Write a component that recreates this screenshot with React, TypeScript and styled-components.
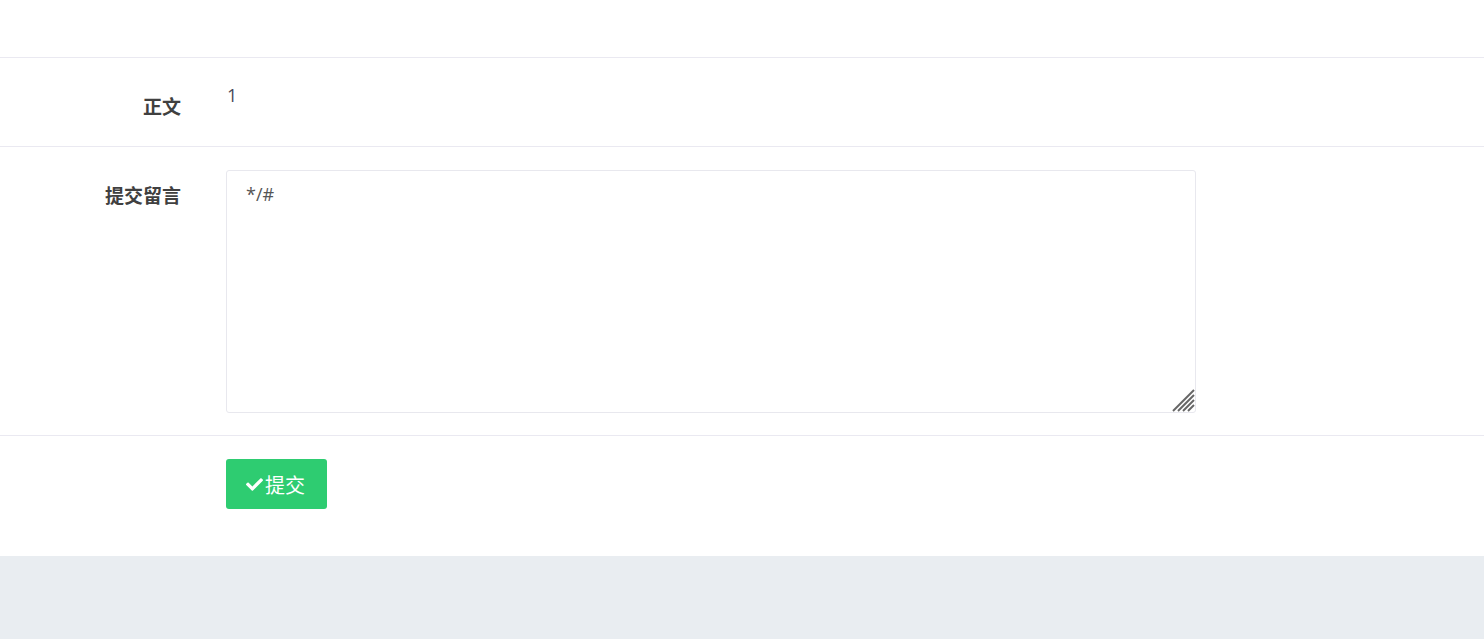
import React from "react";
import styled, { createGlobalStyle } from "styled-components";
import { FaCheck } from "react-icons/fa";

const GlobalStyle = createGlobalStyle`
    html, body {
        margin: 0;
        padding: 0;
        background: #e9edf1;
        font-family: "Open Sans", "Noto Sans CJK SC", sans-serif;
    }
`;

export default function App() {
    return (
        <>
            <GlobalStyle />
            <Panel>
                <TopBar />
                <FormRow $contentHeight={42}>
                    <Label>正文</Label>
                    <Value>1</Value>
                </FormRow>
                <FormRow $bottom={22}>
                    <Label>提交留言</Label>
                    <Field>
                        <TextAreaWrap>
                            <TextArea defaultValue="*/#" />
                            <ResizeGrip width="23" height="23" viewBox="0 0 23 23">
                                <line x1="1" y1="22" x2="22" y2="1" />
                                <line x1="6" y1="22" x2="22" y2="6" />
                                <line x1="11" y1="22" x2="22" y2="11" />
                                <line x1="16" y1="22" x2="22" y2="16" />
                            </ResizeGrip>
                        </TextAreaWrap>
                    </Field>
                </FormRow>
                <FormRow $bottom={47} $last>
                    <Label />
                    <Field>
                        <SubmitButton type="button">
                            <FaCheck size={17} />
                            提交
                        </SubmitButton>
                    </Field>
                </FormRow>
            </Panel>
        </>
    );
}

const Panel = styled.div`
    background: #fff;
    display: flex;
    flex-direction: column;
`;

const TopBar = styled.div`
    height: 57px;
    border-bottom: 1px solid #eae9f1;
`;

const FormRow = styled.div<{ $last?: boolean; $bottom?: number; $contentHeight?: number }>`
    display: grid;
    grid-template-columns: 181px 1fr;
    column-gap: 45px;
    padding: 23px 0 ${(p) => p.$bottom ?? 23}px;
    border-bottom: ${(p) => (p.$last ? "none" : "1px solid #eae9f1")};
    min-height: ${(p) => p.$contentHeight ?? 0}px;
`;

const Label = styled.div`
    text-align: right;
    font-family: "Noto Sans CJK SC", sans-serif;
    font-weight: bold;
    font-size: 19px;
    line-height: 28px;
    color: #404040;
    padding-top: 11px;
`;

const Value = styled.div`
    font-size: 18px;
    line-height: 28px;
    color: #4a4a5a;
    padding-left: 1px;
`;

const Field = styled.div`
    display: flex;
`;

const TextAreaWrap = styled.div`
    position: relative;
    display: flex;
`;

const TextArea = styled.textarea`
    box-sizing: border-box;
    width: 970px;
    height: 243px;
    border: 1px solid #e8e8ee;
    border-radius: 3px;
    padding: 9px 19px;
    font-family: "Open Sans", sans-serif;
    font-size: 18px;
    line-height: 28px;
    color: #555;
    outline: none;
    resize: none;
`;

const ResizeGrip = styled.svg`
    position: absolute;
    right: 1px;
    bottom: 1px;
    pointer-events: none;
    stroke: #666;
    stroke-width: 2;
`;

const SubmitButton = styled.button`
    display: flex;
    align-items: center;
    gap: 2px;
    height: 50px;
    width: 101px;
    padding: 0 0 0 20px;
    border: none;
    border-radius: 3px;
    background: #2ecc71;
    color: #fff;
    font-family: "Noto Sans CJK SC", sans-serif;
    font-size: 20px;
    cursor: pointer;
`;
